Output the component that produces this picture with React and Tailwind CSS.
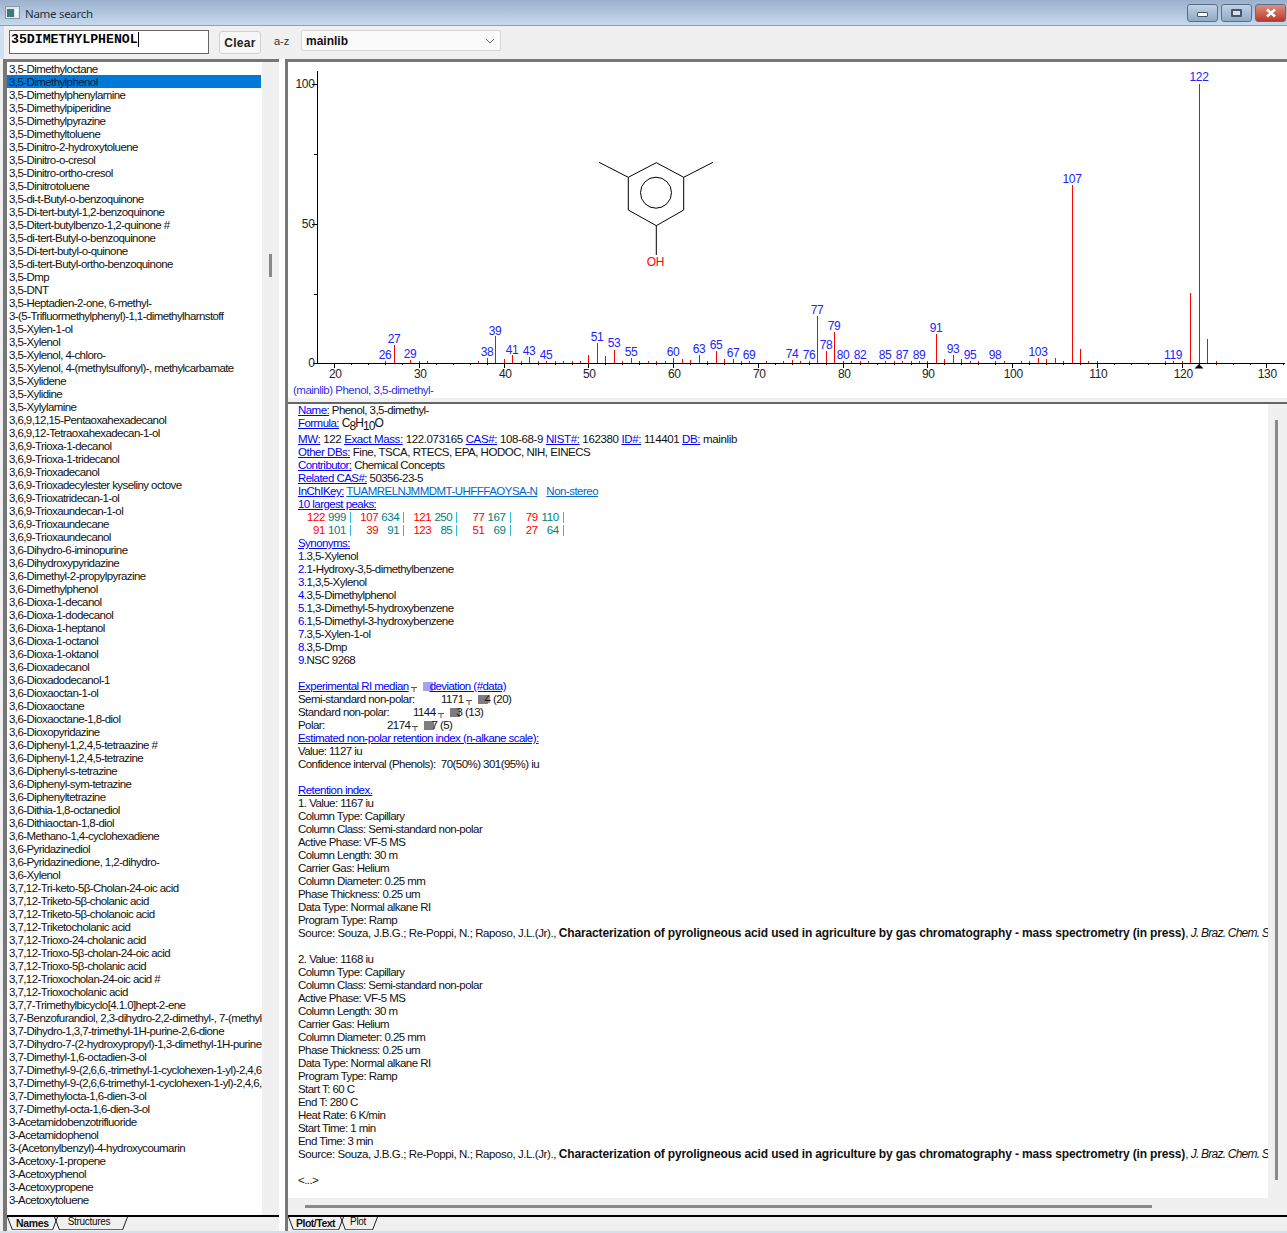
const names = [
  '3,5-Dimethyloctane', '3,5-Dimethylphenol', '3,5-Dimethylphenylamine', '3,5-Dimethylpiperidine', '3,5-Dimethylpyrazine',
  '3,5-Dimethyltoluene', '3,5-Dinitro-2-hydroxytoluene', '3,5-Dinitro-o-cresol', '3,5-Dinitro-ortho-cresol', '3,5-Dinitrotoluene',
  '3,5-di-t-Butyl-o-benzoquinone', '3,5-Di-tert-butyl-1,2-benzoquinone', '3,5-Ditert-butylbenzo-1,2-quinone #', '3,5-di-tert-Butyl-o-benzoquinone', '3,5-Di-tert-butyl-o-quinone',
  '3,5-di-tert-Butyl-ortho-benzoquinone', '3,5-Dmp', '3,5-DNT', '3,5-Heptadien-2-one, 6-methyl-', '3-(5-Trifluormethylphenyl)-1,1-dimethylharnstoff',
  '3,5-Xylen-1-ol', '3,5-Xylenol', '3,5-Xylenol, 4-chloro-', '3,5-Xylenol, 4-(methylsulfonyl)-, methylcarbamate', '3,5-Xylidene',
  '3,5-Xylidine', '3,5-Xylylamine', '3,6,9,12,15-Pentaoxahexadecanol', '3,6,9,12-Tetraoxahexadecan-1-ol', '3,6,9-Trioxa-1-decanol',
  '3,6,9-Trioxa-1-tridecanol', '3,6,9-Trioxadecanol', '3,6,9-Trioxadecylester kyseliny octove', '3,6,9-Trioxatridecan-1-ol', '3,6,9-Trioxaundecan-1-ol',
  '3,6,9-Trioxaundecane', '3,6,9-Trioxaundecanol', '3,6-Dihydro-6-iminopurine', '3,6-Dihydroxypyridazine', '3,6-Dimethyl-2-propylpyrazine',
  '3,6-Dimethylphenol', '3,6-Dioxa-1-decanol', '3,6-Dioxa-1-dodecanol', '3,6-Dioxa-1-heptanol', '3,6-Dioxa-1-octanol',
  '3,6-Dioxa-1-oktanol', '3,6-Dioxadecanol', '3,6-Dioxadodecanol-1', '3,6-Dioxaoctan-1-ol', '3,6-Dioxaoctane',
  '3,6-Dioxaoctane-1,8-diol', '3,6-Dioxopyridazine', '3,6-Diphenyl-1,2,4,5-tetraazine #', '3,6-Diphenyl-1,2,4,5-tetrazine', '3,6-Diphenyl-s-tetrazine',
  '3,6-Diphenyl-sym-tetrazine', '3,6-Diphenyltetrazine', '3,6-Dithia-1,8-octanediol', '3,6-Dithiaoctan-1,8-diol', '3,6-Methano-1,4-cyclohexadiene',
  '3,6-Pyridazinediol', '3,6-Pyridazinedione, 1,2-dihydro-', '3,6-Xylenol', '3,7,12-Tri-keto-5β-Cholan-24-oic acid', '3,7,12-Triketo-5β-cholanic acid',
  '3,7,12-Triketo-5β-cholanoic acid', '3,7,12-Triketocholanic acid', '3,7,12-Trioxo-24-cholanic acid', '3,7,12-Trioxo-5β-cholan-24-oic acid', '3,7,12-Trioxo-5β-cholanic acid',
  '3,7,12-Trioxocholan-24-oic acid #', '3,7,12-Trioxocholanic acid', '3,7,7-Trimethylbicyclo[4.1.0]hept-2-ene', '3,7-Benzofurandiol, 2,3-dihydro-2,2-dimethyl-, 7-(methylcarbamate)', '3,7-Dihydro-1,3,7-trimethyl-1H-purine-2,6-dione',
  '3,7-Dihydro-7-(2-hydroxypropyl)-1,3-dimethyl-1H-purine-2,6-dione', '3,7-Dimethyl-1,6-octadien-3-ol', '3,7-Dimethyl-9-(2,6,6,-trimethyl-1-cyclohexen-1-yl)-2,4,6,8-nonatetraenal', '3,7-Dimethyl-9-(2,6,6-trimethyl-1-cyclohexen-1-yl)-2,4,6,8-nonatetraenal', '3,7-Dimethylocta-1,6-dien-3-ol',
  '3,7-Dimethyl-octa-1,6-dien-3-ol', '3-Acetamidobenzotrifluoride', '3-Acetamidophenol', '3-(Acetonylbenzyl)-4-hydroxycoumarin', '3-Acetoxy-1-propene',
  '3-Acetoxyphenol', '3-Acetoxypropene', '3-Acetoxytoluene',
]

// [m/z, height in px]
const peaks = [
  [26, 2], [27, 18], [29, 3], [30, 2], [31, 2], [37, 2], [38, 5], [39, 27], [40, 4], [41, 8], [42, 2], [43, 6], [44, 2], [45, 2],
  [46, 2], [47, 2], [48, 2], [49, 2], [50, 8], [51, 20], [52, 7], [53, 13], [54, 2], [55, 5], [56, 2], [57, 2], [58, 2], [59, 2],
  [60, 5], [61, 4], [62, 3], [63, 8], [64, 2], [65, 12], [66, 4], [67, 4], [68, 2], [69, 2], [71, 2], [73, 2], [74, 3], [75, 2],
  [76, 2], [77, 47], [78, 12], [79, 31], [80, 2], [81, 2], [82, 2], [83, 2], [85, 2], [86, 2], [87, 2], [88, 2], [89, 2], [90, 2],
  [91, 29], [92, 4], [93, 8], [94, 4], [95, 2], [96, 2], [98, 2], [99, 2], [101, 2], [102, 2], [103, 5], [104, 4], [105, 5], [106, 2],
  [107, 178], [108, 14], [109, 2], [110, 2], [118, 2], [119, 2], [120, 2], [121, 70], [122, 279], [123, 24], [124, 2],
]

// [m/z, y of the text baseline]
const peakLabels = [
  [26, 359], [27, 343], [29, 358], [38, 356], [39, 335], [41, 354], [43, 355], [45, 359], [51, 341], [53, 347], [55, 356], [60, 356],
  [63, 353], [65, 349], [67, 357], [69, 359], [74, 358], [76, 359], [77, 314], [78, 349], [79, 330], [80, 359], [82, 359], [85, 359],
  [87, 359], [89, 359], [91, 332], [93, 353], [95, 359], [98, 359], [103, 356], [119, 359], [107, 183], [122, 81],
]

const mzX = (mz) => Math.floor(334.7 + (mz - 20) * 8.475) + 0.5

const Spectrum = () => {
  const ticks = []
  for (let mz = 20; mz <= 136; mz += 2) ticks.push(mz)

  return (
    <svg viewBox="288 62 999 336" className="block h-[336px] w-[999px]" fontFamily="Liberation Sans" fontSize="12">
      <path d="M317.5 71V363.5M313 363.5H1285" stroke="#000" fill="none" />
      <path d="M312 84.5H317M314 154.5H317M312 224.5H317M314 294.5H317" stroke="#000" fill="none" />
      {ticks.map((mz) => (
        <path key={mz} d={`M${mzX(mz)} 363V${mz % 10 === 0 ? 368 : 365}`} stroke="#000" fill="none" />
      ))}
      {peaks.map(([mz, h]) => (
        <path key={mz} d={`M${mzX(mz)} 363V${363 - h}`} stroke="#ff0000" fill="none" />
      ))}
      {peakLabels.map(([mz, y]) => (
        <text key={mz} x={mzX(mz) - 0.5} y={y} textAnchor="middle" fill="#2222ff">{mz}</text>
      ))}
      {[20, 30, 40, 50, 60, 70, 80, 90, 100, 110, 120, 130].map((mz) => (
        <text key={mz} x={mzX(mz) + 0.8} y={378} textAnchor="middle" fill="#222">{mz}</text>
      ))}
      <text x="314.5" y="88" textAnchor="end" fill="#222">100</text>
      <text x="314.5" y="228" textAnchor="end" fill="#222">50</text>
      <text x="314.5" y="367" textAnchor="end" fill="#222">0</text>
      <path d="M1199 364L1203.5 368.5H1194.5Z" fill="#000" />

      {/* 3,5-dimethylphenol */}
      <g stroke="#000" fill="none">
        <path d="M656.3 162.7L683.7 177.3V210L656.3 225.7L628.3 210V177.3Z" />
        <path d="M628.3 177.3L599 162.3M683.7 177.3L713 162.3M656.3 225.7V255" />
        <circle cx="656" cy="192.7" r="15.5" />
      </g>
      <text x="655.5" y="266" textAnchor="middle" fill="#ff0000">OH</text>
      <text x="293" y="394" fontSize="11.5" letterSpacing="-0.5" fill="#3030e8">(mainlib) Phenol, 3,5-dimethyl-</text>
    </svg>
  )
}

const Line = ({ children, className = '' }) => (
  <div className={`h-[13px] whitespace-nowrap leading-[13px] ${className}`}>{children}</div>
)

const Lnk = ({ children }) => <span className="text-[#0000ff] underline">{children}</span>

const Smudge = ({ tone = 'bg-[#7d7d7d]' }) => (
  <>
    <svg width="6" height="5" viewBox="0 0 6 5" className="mx-[2px] inline-block align-[-2px]">
      <path d="M0 0.5H6M3 0.5V5" stroke="#6a5040" fill="none" />
    </svg>
    <span className={`-mr-[3px] ml-[4px] inline-block h-[9px] w-[10px] align-[-1px] ${tone}`} />
  </>
)

const topPeaks = [
  [[122, 999], [107, 634], [121, 250], [77, 167], [79, 110]],
  [[91, 101], [39, 91], [123, 85], [51, 69], [27, 64]],
]

const columnBlock = (n, value) => [
  `${n}. Value: ${value} iu`,
  'Column Type: Capillary',
  'Column Class: Semi-standard non-polar',
  'Active Phase: VF-5 MS',
  'Column Length: 30 m',
  'Carrier Gas: Helium',
  'Column Diameter: 0.25 mm',
  'Phase Thickness: 0.25 um',
  'Data Type: Normal alkane RI',
  'Program Type: Ramp',
]

const Source = () => (
  <Line className="tracking-[-0.41px]">
    Source: Souza, J.B.G.; Re-Poppi, N.; Raposo, J.L.(Jr)., <b className="text-[12px] tracking-[-0.15px]">Characterization of pyroligneous acid used in agriculture by gas chromatography - mass spectrometry (in press)</b>, <i className="text-[12px] tracking-[-0.77px]">J. Braz. Chem. Soc.</i>
  </Line>
)

const DetailText = () => (
  <div className="h-full overflow-hidden bg-white pl-[10px] tracking-[-0.55px] text-[#111]">
    <Line><Lnk>Name:</Lnk> Phenol, 3,5-dimethyl-</Line>
    <div className="h-[16px] whitespace-nowrap leading-[13px]">
      <Lnk>Formula:</Lnk> <span className="text-[12px] tracking-[-0.9px]">C<sub className="relative top-[3px] align-baseline text-[12px]">8</sub>H<sub className="relative top-[3px] align-baseline text-[12px]">10</sub>O</span>
    </div>
    <Line className="tracking-[-0.36px]"><Lnk>MW:</Lnk> 122 <Lnk>Exact Mass:</Lnk> 122.073165 <Lnk>CAS#:</Lnk> 108-68-9 <Lnk>NIST#:</Lnk> 162380 <Lnk>ID#:</Lnk> 114401 <Lnk>DB:</Lnk> mainlib</Line>
    <Line className="tracking-[-0.48px]"><Lnk>Other DBs:</Lnk> Fine, TSCA, RTECS, EPA, HODOC, NIH, EINECS</Line>
    <Line><Lnk>Contributor:</Lnk> Chemical Concepts</Line>
    <Line><Lnk>Related CAS#:</Lnk> 50356-23-5</Line>
    <Line className="tracking-[-0.52px]">
      <Lnk>InChIKey:</Lnk> <span className="text-[#0066cc] underline">TUAMRELNJMMDMT-UHFFFAOYSA-N</span>
      <span className="ml-[9px] text-[#0066cc] underline">Non-stereo</span>
    </Line>
    <Line><Lnk>10 largest peaks:</Lnk></Line>
    {topPeaks.map((row, i) => (
      <div key={i} className="flex h-[13px] leading-[13px] tracking-[-0.4px]">
        {row.map(([mz, value]) => (
          <div key={mz} className="flex w-[53.2px]">
            <span className="w-[27px] text-right text-[#ff0000]">{mz}</span>
            <span className="w-[21px] text-right text-[#008080]">{value}</span>
            <span className="ml-[4px] h-[11px] w-[1px] self-center bg-[#33bbdd]" />
          </div>
        ))}
      </div>
    ))}
    <Line><Lnk>Synonyms:</Lnk></Line>
    {['3,5-Xylenol', '1-Hydroxy-3,5-dimethylbenzene', '1,3,5-Xylenol', '3,5-Dimethylphenol', '1,3-Dimethyl-5-hydroxybenzene', '1,5-Dimethyl-3-hydroxybenzene', '3,5-Xylen-1-ol', '3,5-Dmp', 'NSC 9268'].map((s, i) => (
      <Line key={s}><span className="text-[#0000ff]">{i + 1}.</span>{s}</Line>
    ))}
    <Line />
    <Line>
      <span className="text-[#0000ff] underline">Experimental RI median<Smudge tone="bg-[#a3a3f0]" />deviation (#data)</span>
    </Line>
    <Line><span className="inline-block w-[143px]">Semi-standard non-polar:</span>1171<Smudge />4 (20)</Line>
    <Line><span className="inline-block w-[115px]">Standard non-polar:</span>1144<Smudge />3 (13)</Line>
    <Line><span className="inline-block w-[89px]">Polar:</span>2174<Smudge />7 (5)</Line>
    <Line><Lnk>Estimated non-polar retention index (n-alkane scale):</Lnk></Line>
    <Line>Value: 1127 iu</Line>
    <Line>Confidence interval (Phenols):&nbsp; 70(50%) 301(95%) iu</Line>
    <Line />
    <Line><Lnk>Retention index.</Lnk></Line>
    {columnBlock(1, 1167).map((s) => <Line key={s}>{s}</Line>)}
    <Source />
    <Line />
    {columnBlock(2, 1168).map((s) => <Line key={s}>{s}</Line>)}
    {['Start T: 60 C', 'End T: 280 C', 'Heat Rate: 6 K/min', 'Start Time: 1 min', 'End Time: 3 min'].map((s) => <Line key={s}>{s}</Line>)}
    <Source />
    <Line />
    <Line>&lt;...&gt;</Line>
  </div>
)

const Slant = ({ back, className = '' }) => (
  <svg width="6" height="13" viewBox="0 0 6 13" className={`block shrink-0 ${className}`}>
    <path d={back ? 'M0.5 0L5.5 13' : 'M5.5 0L0.5 13'} stroke="#222" fill="none" />
  </svg>
)

const TabStrip = ({ active, activeClass = '', other, otherClass }) => (
  <div className="flex h-[16px] border-t-2 border-black">
    <Slant back />
    <span className={`flex h-[13px] items-center border-b border-[#666] px-[3px] text-[10.5px] font-bold leading-none ${activeClass}`}>{active}</span>
    <Slant />
    <Slant back className="-ml-[4px]" />
    <span className={`flex h-[13px] items-center border-b border-[#666] pb-[2px] text-[10px] leading-none tracking-[-0.3px] ${otherClass}`}>{other}</span>
    <Slant />
  </div>
)

const WindowButton = ({ className, children, width = 'w-[31px]' }) => (
  <div className={`flex h-[18px] ${width} items-center justify-center rounded-[3px] border border-[#5b6f8a] ${className}`}>
    {children}
  </div>
)

export default function App() {
  return (
    <div className="flex h-[1233px] w-[1287px] flex-col overflow-hidden bg-[#f0f0f0] font-['Liberation_Sans',sans-serif] text-[11.5px] tracking-[-0.35px] text-[#111]">
      <header className="flex h-[26px] items-center border-b border-[#8fa0b3] bg-gradient-to-b from-[#9bb1cc] to-[#c6d9ee] pl-[5px] pr-[1px] font-['Noto_Sans',sans-serif]">
        <svg width="15" height="13" viewBox="0 0 15 13" className="mr-[5px]">
          <rect x="0.5" y="0.5" width="14" height="12" fill="#dfe6ee" stroke="#8a97a6" />
          <rect x="2" y="3" width="7" height="8" fill="#3d7a78" />
          <rect x="10" y="3" width="3" height="8" fill="#f4f6f8" />
        </svg>
        <span className="pt-[2px] text-[11.5px] tracking-[-0.3px] text-[#26303c]">Name search</span>
        <div className="ml-auto flex gap-[3px]">
          <WindowButton className="bg-gradient-to-b from-[#c0d2e6] to-[#8fa9c6]">
            <span className="mt-[3px] h-[5px] w-[11px] rounded-[1px] border border-[#47566a] bg-white" />
          </WindowButton>
          <WindowButton className="bg-gradient-to-b from-[#c0d2e6] to-[#8fa9c6]">
            <span className="h-[8px] w-[11px] rounded-[1px] border-2 border-[#47566a] bg-[#d5e1ee]" />
          </WindowButton>
          <WindowButton className="border-[#5a2030] bg-gradient-to-b from-[#dd8f80] to-[#b8382a]">
            <svg width="12" height="10" viewBox="0 0 12 10">
              <path d="M2 1.5L10 8.5M10 1.5L2 8.5" stroke="#fff" strokeWidth="2.6" fill="none" />
            </svg>
          </WindowButton>
        </div>
      </header>

      <div className="flex h-[33px] items-start border-l-[4px] border-[#cfe0f1] bg-[#f0f0f0]">
        <div className="ml-[5px] mt-[4px] flex h-[24px] w-[200px] items-start border border-[#666] bg-white pl-[1px] pt-[1px] font-['Liberation_Mono',monospace] text-[13.2px] font-bold leading-[15px] tracking-normal text-black">
          35DIMETHYLPHENOL<span className="h-[15px] w-[1px] bg-black" />
        </div>
        <div className="ml-[10px] mt-[5px] flex h-[23px] w-[42px] items-center justify-center rounded-[3px] border border-[#d0d0d0] bg-[#f7f7f7] text-[12px] font-bold tracking-[0.3px] text-[#222]">
          Clear
        </div>
        <span className="ml-[13px] mt-[9px] w-[15px] whitespace-nowrap text-[11px] leading-[13px] tracking-normal text-[#333]">a-z</span>
        <div className="ml-[12px] mt-[4px] flex h-[21px] w-[200px] items-center justify-between rounded-[2px] border border-[#d4d4d4] bg-[#fafafa] pl-[4px] pr-[4px] text-[12px] font-bold tracking-normal text-[#111]">
          mainlib
          <svg width="12" height="8" viewBox="0 0 12 8">
            <path d="M2 2L6 6L10 2" stroke="#666" fill="none" />
          </svg>
        </div>
      </div>

      <main className="flex min-h-0 flex-1 bg-[#f0f0f0]">
        {/* names panel */}
        <div className="ml-[3px] flex w-[276px] flex-col border-l-[4px] border-t-[3px] border-[#777]">
          <div className="flex min-h-0 flex-1">
            <ul className="w-[255px] overflow-hidden bg-white tracking-[-0.58px]">
              {names.map((name) => (
                <li
                  key={name}
                  className={`h-[13px] overflow-visible whitespace-nowrap pl-[2px] leading-[15px] ${name === '3,5-Dimethylphenol' ? 'mr-[1px] bg-[#0078d7] text-[#04243f]' : ''}`}
                >
                  {name}
                </li>
              ))}
            </ul>
            <div className="flex flex-1 items-start justify-center bg-[#f0f0f0] pt-[192px]">
              <div className="h-[23px] w-[3px] bg-[#8a8a8a]" />
            </div>
          </div>
          <TabStrip active="Names" other="Structures" otherClass="w-[62px] pl-[8px]" />
        </div>

        <div className="w-[6px] bg-white" />

        {/* plot + text panel */}
        <div className="flex min-w-0 flex-1 flex-col border-l-[3px] border-t-[3px] border-[#777]">
          <div className="h-[336px] overflow-hidden bg-white"><Spectrum /></div>
          <div className="h-[4px] bg-[#f0f0f0]" />
          <div className="h-[2px] bg-[#666]" />
          <div className="flex min-h-0 flex-1 flex-col">
            <div className="flex min-h-0 flex-1">
              <div className="w-[980px] overflow-hidden"><DetailText /></div>
              <div className="ml-[7px] h-[760px] w-[3px] translate-y-[16px] bg-[#8a8a8a]" />
            </div>
            <div className="flex h-[17px] items-center pl-[17px]">
              <div className="h-[3px] w-[847px] bg-[#8a8a8a]" />
            </div>
          </div>
          <TabStrip active="Plot/Text" activeClass="-ml-[1px] tracking-[-0.5px]" other="Plot" otherClass="w-[26px] pl-[4px]" />
        </div>
      </main>
      <div className="h-[2px] bg-[#cfe0f1]" />
    </div>
  )
}
